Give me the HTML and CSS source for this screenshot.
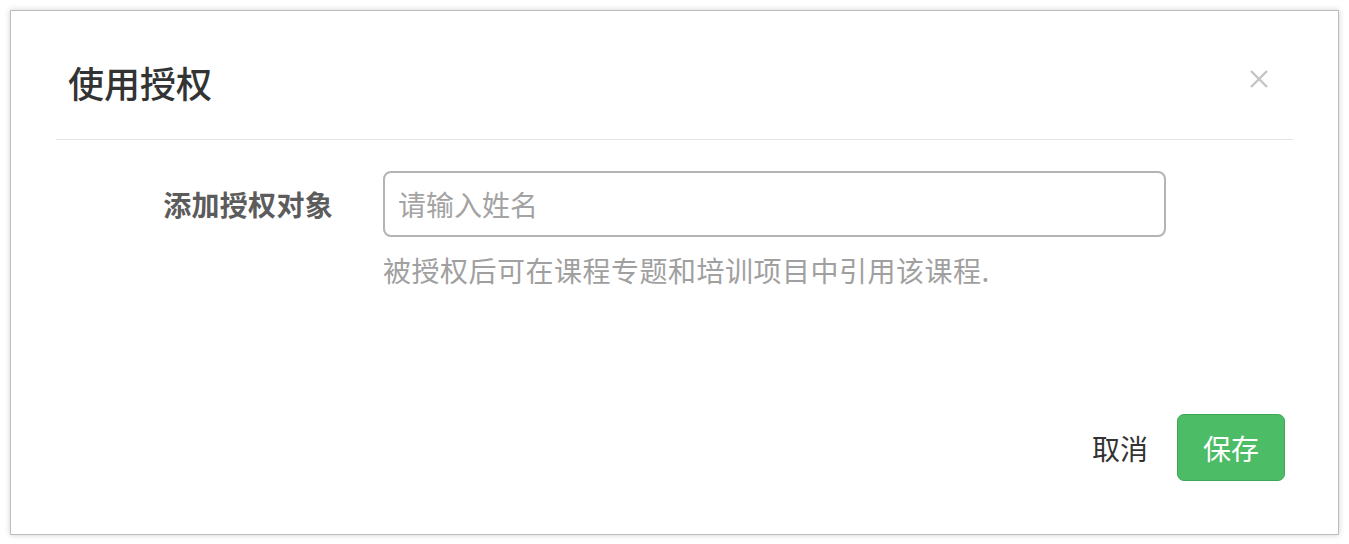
FILE: index.html
```html
<!DOCTYPE html>
<html lang="zh-CN">
<head>
    <meta charset="UTF-8">
    <meta name="viewport" content="width=device-width, initial-scale=1.0">
    <title>使用授权</title>
    <link rel="stylesheet" href="styles.css">
</head>
<body>

<div class="modal">
    <div class="modal-header">
        <h4 class="modal-title">使用授权</h4>
        <button class="close" type="button" aria-label="关闭">
            <svg width="20" height="20" viewBox="0 0 20 20">
                <path d="M2 2 L18 18 M18 2 L2 18" stroke="#c4c4c4" stroke-width="2.4" fill="none"/>
            </svg>
        </button>
    </div>
    <div class="modal-body">
        <div class="form-row">
            <label class="form-label" for="name">添加授权对象</label>
            <div class="form-field">
                <input class="form-input" id="name" type="text" placeholder="请输入姓名">
                <div class="help-text">被授权后可在课程专题和培训项目中引用该课程.</div>
            </div>
        </div>
    </div>
    <div class="modal-footer">
        <button class="btn btn-link" type="button">取消</button>
        <button class="btn btn-primary" type="button">保存</button>
    </div>
</div>

</body>
</html>
```

FILE: styles.css
```css
body {
    margin: 0;
    padding: 10px;
    background-color: #fff;
    font-family: "Noto Sans CJK SC", "Noto Sans", sans-serif;
    color: #333;
}
.modal {
    box-sizing: border-box;
    height: 525px;
    display: flex;
    flex-direction: column;
    background-color: #fff;
    border: 1px solid #bdbdbd;
    box-shadow: 0 0 6px rgba(0, 0, 0, 0.18);
}
.modal-header {
    margin: 0 45px;
    padding: 51px 24px 37px 12px;
    display: flex;
    align-items: center;
    justify-content: space-between;
    border-bottom: 1px solid #e3e3e3;
}
.modal-title {
    margin: 0;
    font-size: 36px;
    line-height: 40px;
    font-weight: 500;
    color: #333;
}
.close {
    padding: 0;
    margin-top: -6px;
    border: 0;
    background: none;
    line-height: 0;
    cursor: pointer;
}
.modal-body {
    padding: 31px 45px 0;
}
.form-row {
    display: grid;
    grid-template-columns: 277px 783px;
    column-gap: 50px;
}
.form-label {
    text-align: right;
    font-size: 28px;
    line-height: 66px;
    font-weight: 700;
    color: #5c5c5c;
    letter-spacing: 0.3px;
}
.form-input {
    box-sizing: border-box;
    width: 100%;
    height: 66px;
    padding: 0 13px;
    border: 2px solid #b4b4b4;
    border-radius: 8px;
    font-family: inherit;
    font-size: 28px;
    color: #333;
    outline: none;
}
.form-input::placeholder {
    color: #a3a3a3;
}
.help-text {
    margin-top: 13px;
    font-size: 28px;
    line-height: 40px;
    color: #a0a0a0;
    letter-spacing: 0.5px;
}
.modal-footer {
    margin-top: auto;
    padding: 0 53px 53px 0;
    display: flex;
    justify-content: flex-end;
    align-items: center;
    gap: 29px;
}
.btn {
    font-family: inherit;
    font-size: 28px;
    line-height: 40px;
    cursor: pointer;
}
.btn-link {
    padding: 0;
    border: 0;
    background: none;
    color: #333;
}
.btn-primary {
    box-sizing: border-box;
    height: 67px;
    width: 108px;
    padding: 0;
    border: 1px solid #3ea757;
    border-radius: 7px;
    background-color: #4cbc66;
    color: #fff;
}
```
